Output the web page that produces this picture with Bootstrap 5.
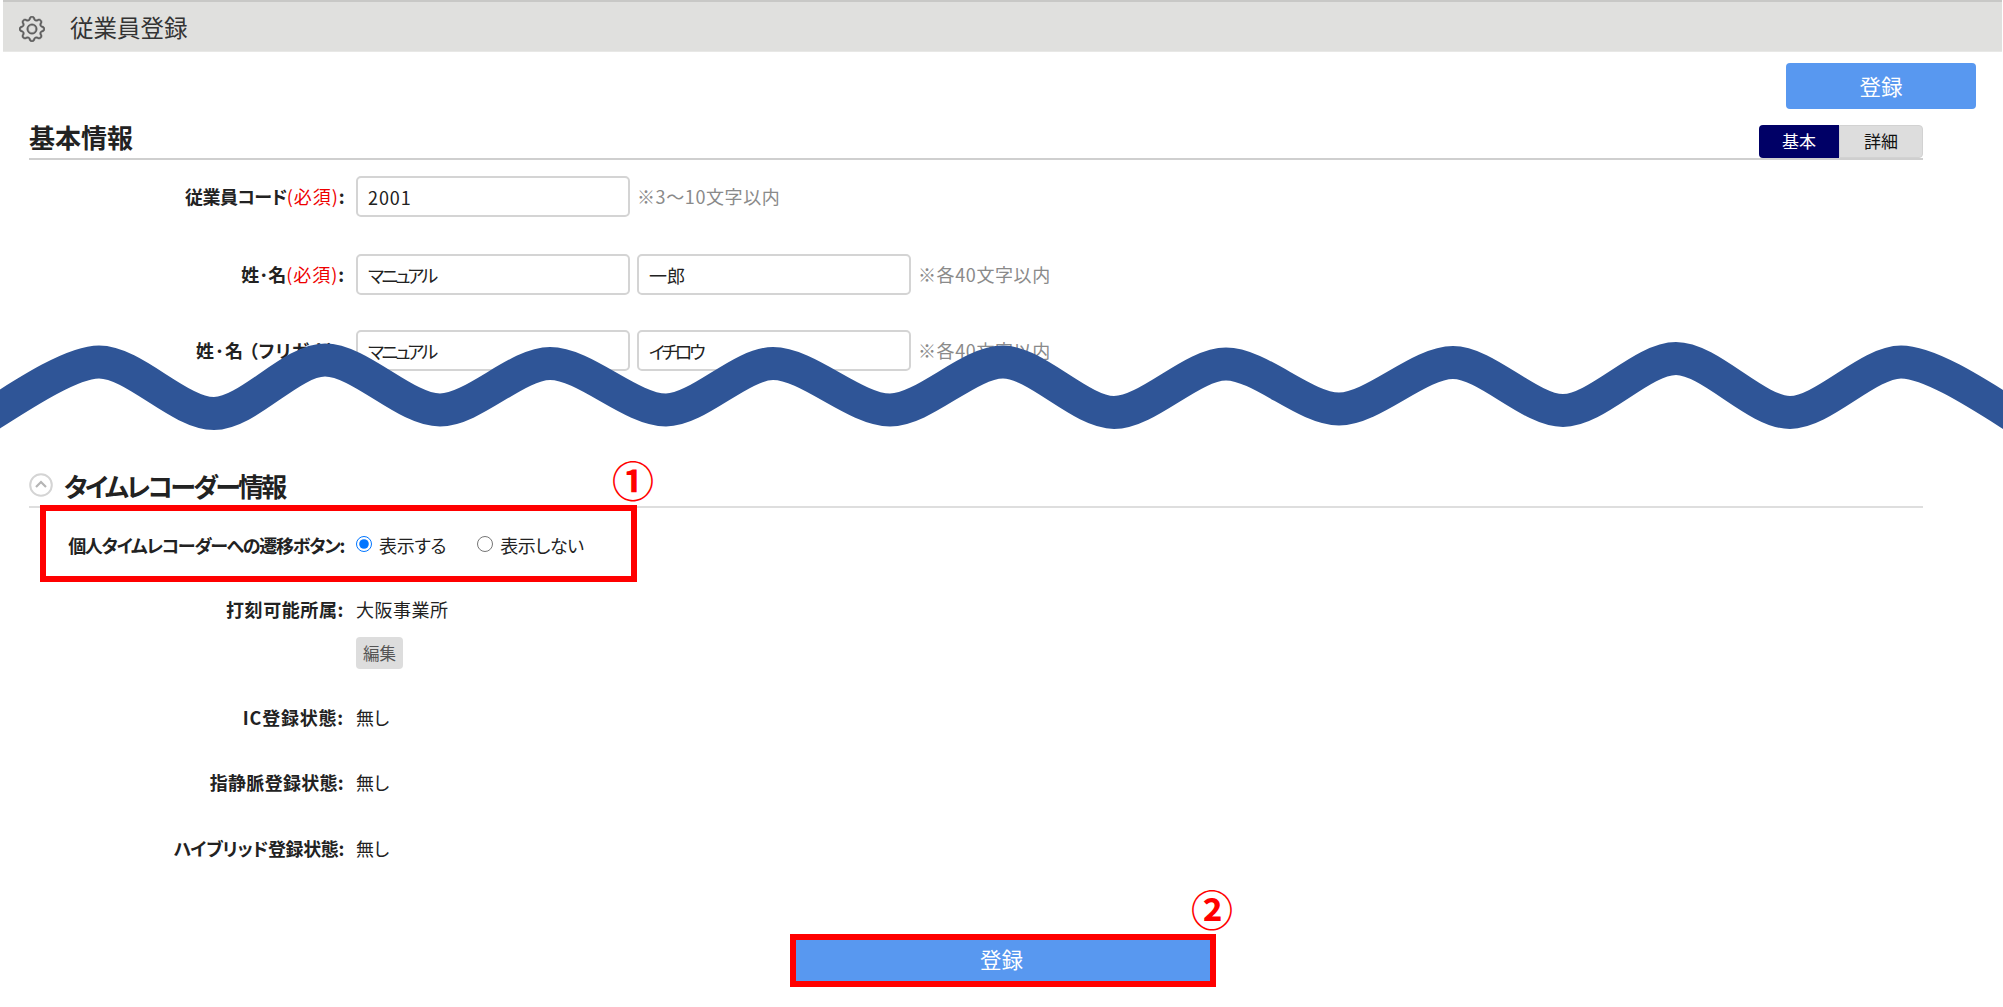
<!DOCTYPE html>
<html lang="ja">
<head>
<meta charset="utf-8">
<title>従業員登録</title>
<link rel="stylesheet" href="https://cdn.jsdelivr.net/npm/bootstrap@5.3.0/dist/css/bootstrap.min.css">
<style>
html,body{background:#fff;margin:0;}
body{width:2003px;height:1007px;overflow:hidden;position:relative;font-family:"Noto Sans CJK JP","Liberation Sans",sans-serif;font-size:18px;color:#222;font-feature-settings:"palt";line-height:1.3;}
.page-head{margin-left:3px;margin-right:1px;height:52px;background:#e0e0de;border-top:2px solid #c8c8c6;border-bottom:1px solid #e8e8e6;padding:4px 0 0 16px;gap:25px;}
.page-head svg{width:26px;height:26px;fill:#5f5f5f;stroke:#5f5f5f;stroke-width:.25;}
.page-head span{font-size:23.5px;color:#333;font-feature-settings:normal;margin-top:-2px;}
.tool-row{padding:11px 27px 0 0;height:58px;box-sizing:content-box;}
.reg-btn{background:#5898f0;color:#fff;border:0;border-radius:4px;font-size:21.5px;font-feature-settings:normal;padding:0;line-height:1;}
.tool-row .reg-btn{width:190px;height:46px;}
.sec-head{margin:-4px 80px 0 29px;border-bottom:2px solid #cfcfcf;height:43px;align-items:flex-end;}
.sec-head h2,.sec-title{font-size:26px;font-weight:700;margin:0;color:#222;line-height:1.3;}
.sec-head h2{padding-bottom:4px;font-feature-settings:normal;}
.tabs{width:164px;height:33px;font-size:17px;font-feature-settings:normal;}
.tab-on{background:#000066;color:#fff;width:80px;border-radius:4px 0 0 4px;}
.tab-off{background:#ddd;color:#111;flex:1;border-radius:0 4px 4px 0;border:1px solid #d2d2d2;}
.frow{display:flex;align-items:center;}
.flabel{width:344px;flex:none;text-align:right;font-weight:700;color:#222;white-space:nowrap;}
.req{color:#e00;font-weight:400;letter-spacing:.9px;}
.fbody{margin-left:12px;display:flex;align-items:center;}
.field{width:274px;height:41px;border:2px solid #d4d4d4;border-radius:5px;padding:0 10px;font-size:18px;color:#222;font-family:inherit;font-feature-settings:"palt";background:#fff;box-shadow:none;}
.field + .field{margin-left:7px;}
.digits{letter-spacing:.9px;}
.kana-a{letter-spacing:-2.7px;}
.kana-b{letter-spacing:-3.2px;}
.note{color:#8a8a8a;margin-left:7px;letter-spacing:.6px;}
.r1{margin-top:16px;}
.r2{margin-top:37px;}
.r3{margin-top:35px;}
.sec-two{margin:102px 80px 0 29px;border-bottom:2px solid #dedede;height:35px;align-items:flex-start;}
.sec-two svg{width:24px;height:24px;margin-right:11px;}
.sec-title{letter-spacing:-2.7px;margin-top:-4px;}
.sp-code{letter-spacing:-.5px;}
.sp-code .req{letter-spacing:.9px;}
.sp-kana{letter-spacing:.9px;}
.sp-long{letter-spacing:-1.3px;}
.sp-hy{letter-spacing:-.35px;}
.sp-time{letter-spacing:.6px;}
.sp-ic{letter-spacing:.8px;}
.sp-vein{letter-spacing:.3px;}
.val-a{letter-spacing:.5px;}
.opt{accent-color:#0075ff;width:16px;height:16px;margin:0 7px 3px 0;}
.opt2{margin-left:31px;}
.txt-a{letter-spacing:-.3px;}
.txt-b{letter-spacing:-.5px;}
.r4{margin-top:26px;height:24px;}
.r5{margin-top:40px;height:24px;}
.edit{margin-left:356px;margin-top:15px;width:47px;height:32px;background:#ddd;color:#555;border:0;border-radius:4px;font-size:16.5px;padding:0;font-feature-settings:normal;line-height:1;display:block;}
.r6{margin-top:37px;height:24px;}
.r7{margin-top:41px;height:24px;}
.r8{margin-top:42px;height:24px;}
.foot{margin-top:79px;}
.foot .reg-btn{width:418px;height:41px;border-radius:0;padding-bottom:4px;}
.mark-box{position:absolute;border:6px solid #f00;pointer-events:none;}
.b1{left:40px;top:505px;width:597px;height:77px;}
.b2{left:790px;top:934px;width:426px;height:53px;}
.num{position:absolute;color:#f00;font-weight:700;font-size:42px;line-height:1;font-family:"Noto Sans CJK JP",sans-serif;font-feature-settings:normal;}
.n1{left:612px;top:458px;}
.n2{left:1191px;top:887px;}
.wave{position:absolute;left:0;top:0;width:2003px;height:1007px;pointer-events:none;}
</style>
</head>
<body>
<header class="page-head d-flex align-items-center">
  <svg viewBox="0 0 16 16"><path d="M8 4.754a3.246 3.246 0 1 0 0 6.492 3.246 3.246 0 0 0 0-6.492zM5.754 8a2.246 2.246 0 1 1 4.492 0 2.246 2.246 0 0 1-4.492 0z"/><path d="M9.796 1.343c-.527-1.79-3.065-1.79-3.592 0l-.094.319a.873.873 0 0 1-1.255.52l-.292-.16c-1.64-.892-3.433.902-2.54 2.541l.159.292a.873.873 0 0 1-.52 1.255l-.319.094c-1.79.527-1.79 3.065 0 3.592l.319.094a.873.873 0 0 1 .52 1.255l-.16.292c-.892 1.64.901 3.434 2.541 2.54l.292-.159a.873.873 0 0 1 1.255.52l.094.319c.527 1.79 3.065 1.79 3.592 0l.094-.319a.873.873 0 0 1 1.255-.52l.292.16c1.64.893 3.434-.902 2.54-2.541l-.159-.292a.873.873 0 0 1 .52-1.255l.319-.094c1.79-.527 1.79-3.065 0-3.592l-.319-.094a.873.873 0 0 1-.52-1.255l.16-.292c.893-1.64-.902-3.433-2.541-2.54l-.292.159a.873.873 0 0 1-1.255-.52l-.094-.319zm-2.633.283c.246-.835 1.428-.835 1.674 0l.094.319a1.873 1.873 0 0 0 2.693 1.115l.291-.16c.764-.415 1.6.42 1.184 1.185l-.159.292a1.873 1.873 0 0 0 1.116 2.692l.318.094c.835.246.835 1.428 0 1.674l-.319.094a1.873 1.873 0 0 0-1.115 2.693l.16.291c.415.764-.42 1.6-1.185 1.184l-.291-.159a1.873 1.873 0 0 0-2.693 1.116l-.094.318c-.246.835-1.428.835-1.674 0l-.094-.319a1.873 1.873 0 0 0-2.692-1.115l-.292.16c-.764.415-1.6-.42-1.184-1.185l.159-.291A1.873 1.873 0 0 0 1.945 8.93l-.319-.094c-.835-.246-.835-1.428 0-1.674l.319-.094A1.873 1.873 0 0 0 3.06 4.377l-.16-.292c-.415-.764.42-1.6 1.185-1.184l.292.159a1.873 1.873 0 0 0 2.692-1.115l.094-.319z"/></svg>
  <span>従業員登録</span>
</header>
<div class="tool-row d-flex justify-content-end align-items-start"><button class="btn reg-btn" type="button">登録</button></div>
<div class="sec-head d-flex justify-content-between">
  <h2>基本情報</h2>
  <div class="tabs d-flex">
    <div class="tab-on d-flex align-items-center justify-content-center">基本</div>
    <div class="tab-off d-flex align-items-center justify-content-center">詳細</div>
  </div>
</div>
<div class="frow r1"><div class="flabel sp-code">従業員コード<span class="req">(必須)</span>:</div><div class="fbody"><input class="field digits" value="2001"><span class="note">※3〜10文字以内</span></div></div>
<div class="frow r2"><div class="flabel">姓･名<span class="req">(必須)</span>:</div><div class="fbody"><input class="field kana-a" value="マニュアル"><input class="field" value="一郎"><span class="note">※各40文字以内</span></div></div>
<div class="frow r3"><div class="flabel sp-kana">姓･名&nbsp;（フリガナ）:</div><div class="fbody"><input class="field kana-a" value="マニュアル"><input class="field kana-b" value="イチロウ"><span class="note">※各40文字以内</span></div></div>
<div class="sec-two d-flex">
  <svg viewBox="0 0 24 24" fill="none"><circle cx="12" cy="12" r="10.8" stroke="#d4d4d4" stroke-width="2"/><path d="M7 14l5-5 5 5" stroke="#b5b5b5" stroke-width="2.2"/></svg>
  <div class="sec-title">タイムレコーダー情報</div>
</div>
<div class="frow r4"><div class="flabel sp-long">個人タイムレコーダーへの遷移ボタン:</div><div class="fbody"><input class="opt" type="radio" name="tr" checked><span class="txt-a">表示する</span><input class="opt opt2" type="radio" name="tr"><span class="txt-b">表示しない</span></div></div>
<div class="frow r5"><div class="flabel sp-time">打刻可能所属:</div><div class="fbody val-a">大阪事業所</div></div>
<button class="btn edit" type="button">編集</button>
<div class="frow r6"><div class="flabel sp-ic">IC登録状態:</div><div class="fbody">無し</div></div>
<div class="frow r7"><div class="flabel sp-vein">指静脈登録状態:</div><div class="fbody">無し</div></div>
<div class="frow r8"><div class="flabel sp-hy">ハイブリッド登録状態:</div><div class="fbody">無し</div></div>
<div class="foot d-flex justify-content-center"><button class="btn reg-btn" type="button">登録</button></div>

<svg class="wave" viewBox="0 0 2003 1007"><path fill="none" stroke="#2f5597" stroke-width="33" d="M-46 437C-14 421 62 362 99 362C134 362 179 413.500 214 413.500C248 413.500 291 360 325 360C360 360 405 410 440 410C473 410 517 363.500 550 363.500C585 363.500 631 410 666 410C698 410 741 363.500 773 363.500C808 363.500 855 410 890 410C924 410 969 362 1003 362C1036 362 1081 412.500 1114 412.500C1148 412.500 1192 364 1226 364C1260 364 1305 409 1339 409C1373 409 1419 362.500 1453 362.500C1486 362.500 1530 410.500 1563 410.500C1597 410.500 1642 358.500 1676 358.500C1710 358.500 1756 412.500 1790 412.500C1823 412.500 1868 362 1901 362C1940 362 2016 421 2049 437"/></svg>
<div class="mark-box b1"></div>
<div class="mark-box b2"></div>
<div class="num n1">①</div>
<div class="num n2">②</div>
</body>
</html>
